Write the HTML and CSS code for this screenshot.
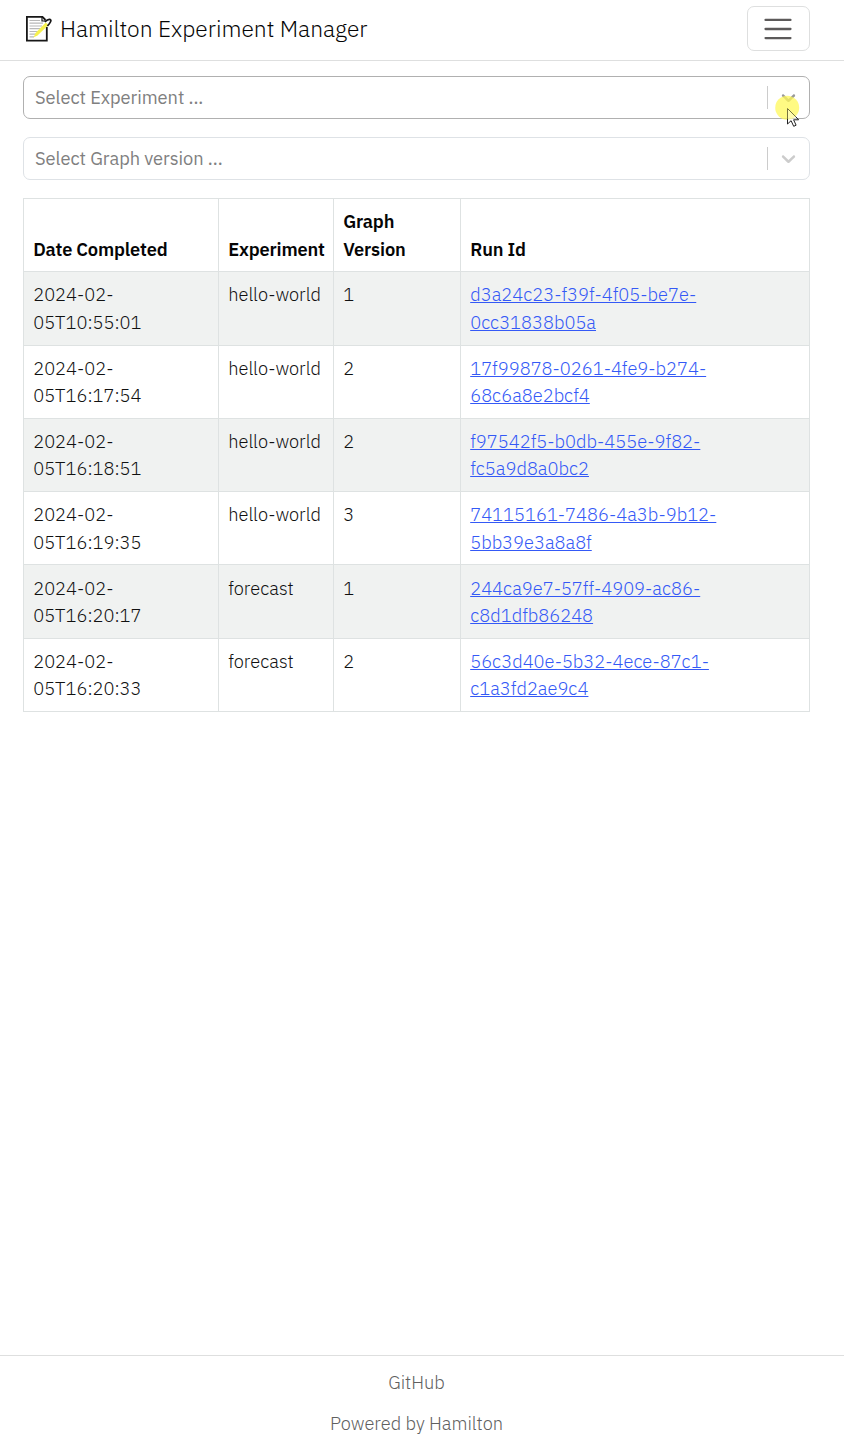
FILE: index.html
```html
<!DOCTYPE html>
<html lang="en">
<head>
<meta charset="utf-8">
<title>Hamilton Experiment Manager</title>
<link rel="stylesheet" href="styles.css">
</head>
<body>
<header class="navbar">
  <div class="brand">
    <svg class="logo" width="28" height="28" viewBox="0 0 28 28" fill="none">
      <path d="M21.8 12V25.6H1.9V1.9H17.5L20.5 5" fill="#fff" stroke="#171717" stroke-width="1.8"/>
      <path d="M4.5 5.5H15M4.5 8.2H18M4.5 11H17M4.5 13.7H15M4.5 16.5H13M4.5 19.2H11M4.5 21.8H9" stroke="#b8b8b8" stroke-width="1.2"/>
      <path d="M17 2V6H20" stroke="#171717" stroke-width="1.2"/>
      <path d="M8.5 22.5L10.5 18L20.8 7.5L23.4 10L12.5 20.5Z" fill="#f7f14e"/>
      <path d="M19.8 6.8L22.4 5.1Q25.4 3.5 25.9 5.5Q25.8 7.4 22.4 11" stroke="#171717" stroke-width="1.7"/>
    </svg>
    <span class="brand-name">Hamilton Experiment Manager</span>
  </div>
  <button class="toggler" aria-label="Menu">
    <svg width="34" height="34" viewBox="0 0 30 30"><path d="M4 7h22M4 15h22M4 23h22" stroke="#5c5a5a" stroke-width="2" stroke-linecap="round"/></svg>
  </button>
</header>
<main>
  <div class="select hovered"><span>Select Experiment ...</span><i class="divider"></i><svg class="chevron" width="23" height="23" viewBox="0 0 20 20"><path d="M4.516 7.548c0.436-0.446 1.043-0.481 1.576 0l3.908 3.747 3.908-3.747c0.533-0.481 1.141-0.446 1.574 0 0.436 0.445 0.408 1.197 0 1.615-0.406 0.418-4.695 4.502-4.695 4.502-0.217 0.223-0.502 0.335-0.787 0.335s-0.57-0.112-0.789-0.335c0 0-4.287-4.084-4.695-4.502s-0.436-1.17 0-1.615z"/></svg>
    <svg class="pointer" width="26" height="34" viewBox="0 0 26 34"><circle cx="12.2" cy="12.8" r="12"/><path d="M12.5 13.5V29L16.1 25.7L18.7 31.3L21.1 30.2L18.6 24.8H23.6Z" fill="#fff" fill-opacity=".35"/><path d="M12.5 24V29L16.1 25.7L18.7 31.3L21.1 30.2L18.6 24.8H23.6L21 22" fill="none" stroke="#222"/><path d="M12.5 24V13.5L21 22" fill="none" stroke="#77743f"/></svg>
  </div>
  <div class="select"><span>Select Graph version ...</span><i class="divider"></i><svg class="chevron" width="23" height="23" viewBox="0 0 20 20"><path d="M4.516 7.548c0.436-0.446 1.043-0.481 1.576 0l3.908 3.747 3.908-3.747c0.533-0.481 1.141-0.446 1.574 0 0.436 0.445 0.408 1.197 0 1.615-0.406 0.418-4.695 4.502-4.695 4.502-0.217 0.223-0.502 0.335-0.787 0.335s-0.57-0.112-0.789-0.335c0 0-4.287-4.084-4.695-4.502s-0.436-1.17 0-1.615z"/></svg></div>
  <table>
    <colgroup><col class="c-date"><col class="c-exp"><col class="c-ver"><col></colgroup>
    <thead><tr><th>Date Completed</th><th>Experiment</th><th>Graph<br>Version</th><th>Run Id</th></tr></thead>
    <tbody>
      <tr><td>2024-02-<br>05T10:55:01</td><td>hello-world</td><td>1</td><td><a>d3a24c23-f39f-4f05-be7e-<br>0cc31838b05a</a></td></tr>
      <tr><td>2024-02-<br>05T16:17:54</td><td>hello-world</td><td>2</td><td><a>17f99878-0261-4fe9-b274-<br>68c6a8e2bcf4</a></td></tr>
      <tr><td>2024-02-<br>05T16:18:51</td><td>hello-world</td><td>2</td><td><a>f97542f5-b0db-455e-9f82-<br>fc5a9d8a0bc2</a></td></tr>
      <tr><td>2024-02-<br>05T16:19:35</td><td>hello-world</td><td>3</td><td><a>74115161-7486-4a3b-9b12-<br>5bb39e3a8a8f</a></td></tr>
      <tr><td>2024-02-<br>05T16:20:17</td><td>forecast</td><td>1</td><td><a>244ca9e7-57ff-4909-ac86-<br>c8d1dfb86248</a></td></tr>
      <tr><td>2024-02-<br>05T16:20:33</td><td>forecast</td><td>2</td><td><a>56c3d40e-5b32-4ece-87c1-<br>c1a3fd2ae9c4</a></td></tr>
    </tbody>
  </table>
</main>
<footer><a>GitHub</a><span>Powered by Hamilton</span></footer>
</body>
</html>
```
FILE: styles.css
```css
* { box-sizing: border-box; }
body {
  margin: 0;
  min-height: 1441px;
  display: flex;
  flex-direction: column;
  background: #fff;
  color: #111;
  font: 300 18.27px/27.4px "IBM Plex Sans", Roboto, "Noto Sans", sans-serif;
}
.navbar {
  height: 61px;
  padding: 0 34px 4px 25px;
  display: flex;
  align-items: center;
  justify-content: space-between;
  border-bottom: 1px solid #dedfdf;
}
.brand { display: flex; align-items: center; gap: 7px; }
.logo { display: block; margin-top: 1px; }
.brand-name { padding-top: 2px; font-size: 22.84px; line-height: 34px; color: #050505; white-space: nowrap; }
.toggler {
  width: 63px;
  height: 45px;
  padding: 2px 2px 0 0;
  display: grid;
  place-items: center;
  background: none;
  border: 1px solid #dedfdf;
  border-radius: 7px;
}
main { flex: 1; padding: 15px 34px 0 23px; }
.select {
  position: relative;
  height: 43px;
  margin-bottom: 18px;
  padding: 0 9px 0 11px;
  display: flex;
  align-items: center;
  border: 1px solid #dee2e6;
  border-radius: 7px;
  color: #808080;
  font-weight: 400;
}
.select span { flex: 1; letter-spacing: -.05px; }
.hovered { border-color: #b0b0b0; }
.divider { width: 1px; height: 23px; background: #ccc; margin-right: 9px; }
.chevron { fill: #ccc; }
.hovered .chevron { fill: #999; }
.pointer { position: absolute; left: 751px; top: 18px; }
.pointer circle { fill: #fff85a; fill-opacity: .75; }
table { width: 787px; table-layout: fixed; border-collapse: collapse; }
.c-date { width: 195px; }
.c-exp { width: 115px; }
.c-ver { width: 127px; }
th, td {
  height: 73.3px;
  padding: 9.1px 0 8.4px 9.2px;
  border: 1px solid #dee2e2;
  text-align: left;
  vertical-align: top;
  white-space: nowrap;
}
th { font-weight: 600; color: #050505; vertical-align: bottom; letter-spacing: -.17px; }
tbody tr:nth-child(odd) { background: #f0f2f1; }
td a { color: #3459f6; text-decoration: underline; }
footer {
  height: 86px;
  padding: 13px 11px 0 0;
  display: flex;
  flex-direction: column;
  align-items: center;
  gap: 14px;
  border-top: 1px solid #dedfdf;
  color: #606060;
}
```
